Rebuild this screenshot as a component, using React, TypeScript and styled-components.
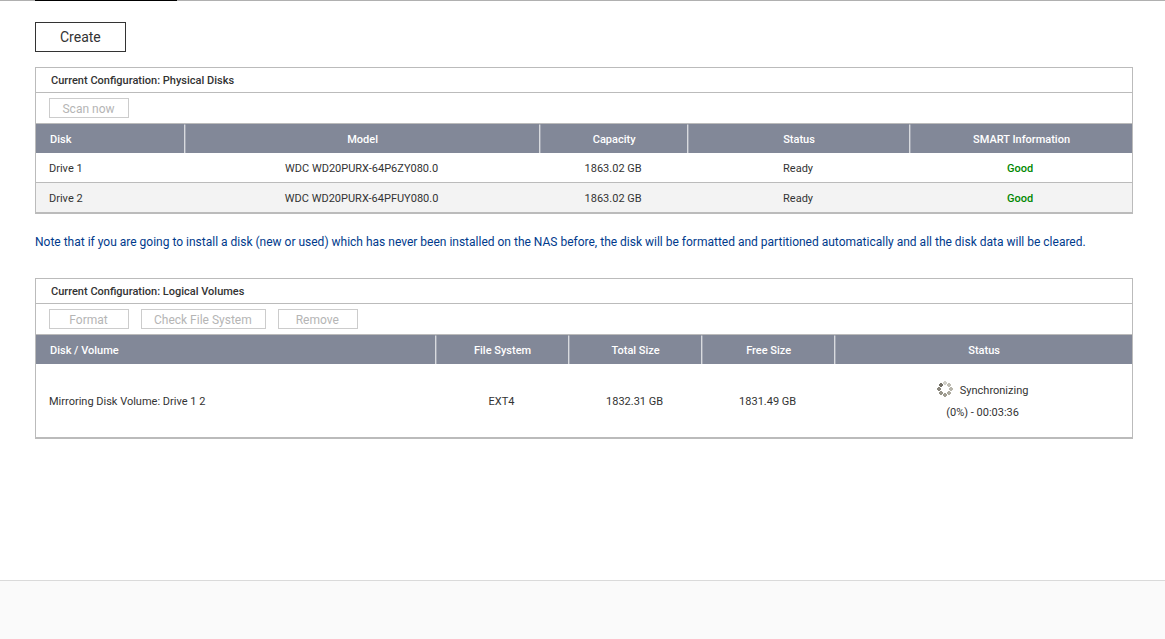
import React from "react";
import styled, { createGlobalStyle } from "styled-components";

const GlobalStyle = createGlobalStyle`
  *, *::before, *::after { box-sizing: border-box; }
  body {
    margin: 0;
    background: #fff;
    color: #333;
    font: 11px/16px Roboto, "Liberation Sans", sans-serif;
  }
`;

const Page = styled.div`
  display: flex;
  flex-direction: column;
  min-height: 100vh;
`;

const TabLine = styled.div`
  height: 1px;
  padding-left: 35px;
  background: #b0b0b0;
`;

const ActiveTabLine = styled.div`
  width: 142px;
  height: 1px;
  background: #000;
`;

const Content = styled.main`
  flex: 1;
  padding: 21px 32px 24px 35px;
`;

const CreateButton = styled.button`
  display: block;
  height: 30px;
  margin-bottom: 15px;
  padding: 0 24px;
  border: 1px solid #333;
  background: #fff;
  color: #333;
  font: 14px/28px Roboto, "Liberation Sans", sans-serif;
`;

const Panel = styled.section`
  border: 1px solid #bbb;
  border-bottom-width: 2px;
`;

const PanelTitle = styled.h2`
  margin: 0;
  padding: 2px 15px 0;
  border-bottom: 1px solid #bbb;
  font-size: 11px;
  font-weight: 500;
  line-height: 22px;
`;

const Toolbar = styled.div`
  display: flex;
  gap: 12px;
  padding: 5px 13px;
  border-bottom: 1px solid #bbb;
`;

const ToolButton = styled.button`
  height: 20px;
  min-width: 80px;
  padding: 2px 13px 0 12px;
  border: 1px solid #ccc;
  background: #fff;
  color: #b5b5b5;
  font: 12px/16px Roboto, "Liberation Sans", sans-serif;
`;

const Table = styled.table`
  width: 100%;
  border-collapse: separate;
  border-spacing: 0;
  table-layout: fixed;
`;

const Column = styled.col<{ $share?: string }>`
  width: ${(p) => p.$share ?? "auto"};
`;

const HeadCell = styled.th`
  height: 29px;
  padding: 1px 0 0;
  border-top: 1px solid #828898;
  border-right: 1px solid #d8dade;
  border-left: 1px solid #a4a8b4;
  background: #828898;
  color: #fff;
  font-weight: 500;
  text-align: center;
  &:first-child { padding-left: 14px; border-left: 0; text-align: left; }
  &:last-child { border-right: 0; }
`;

const Row = styled.tr<{ $shaded?: boolean }>`
  background: ${(p) => (p.$shaded ? "#f3f3f3" : "#fff")};
`;

const Cell = styled.td<{ $tall?: boolean; $good?: boolean; $divided?: boolean }>`
  height: ${(p) => (p.$tall ? "73px" : p.$divided ? "30px" : "29px")};
  padding: 2px 2px 0 0;
  border-bottom: ${(p) => (p.$divided ? "1px solid #bbb" : "0")};
  color: ${(p) => (p.$good ? "#008800" : "inherit")};
  font-weight: ${(p) => (p.$good ? 500 : 400)};
  text-align: center;
  &:first-child { padding-left: 13px; text-align: left; }
`;

const Note = styled.p`
  margin: 20px 0 28px;
  color: #003a8c;
  font-size: 12px;
  line-height: 16px;
`;

const Sync = styled.div`
  display: flex;
  flex-direction: column;
  align-items: center;
  line-height: 22px;
`;

const SyncLine = styled.div`
  display: flex;
  align-items: center;
  gap: 7px;
`;

const SpinnerIcon = styled.svg`
  margin-bottom: 4px;
`;

const Footer = styled.footer`
  height: 59px;
  border-top: 1px solid #dadada;
  background: #fafafa;
`;

const dots = [
  { x: 8, y: 2, c: "#d0cfc8" },
  { x: 12, y: 4, c: "#c0beb5" },
  { x: 14, y: 8, c: "#b8b6ac" },
  { x: 12, y: 12, c: "#aeaba0" },
  { x: 8, y: 14, c: "#a09d92" },
  { x: 4, y: 12, c: "#98958a" },
  { x: 2, y: 8, c: "#89867c" },
  { x: 4, y: 4, c: "#737067" },
];

const Spinner = () => (
  <SpinnerIcon width="16" height="16" viewBox="0 0 16 16" aria-hidden="true">
    {dots.map((d) => (
      <path
        key={`${d.x}-${d.y}`}
        fill={d.c}
        d={`M${d.x - 1} ${d.y - 2}h2v1h1v2h-1v1h-2v-1h-1v-2h1z`}
      />
    ))}
  </SpinnerIcon>
);

const disks = [
  { name: "Drive 1", model: "WDC WD20PURX-64P6ZY080.0" },
  { name: "Drive 2", model: "WDC WD20PURX-64PFUY080.0" },
];

export default function App() {
  return (
    <Page>
      <GlobalStyle />
      <TabLine>
        <ActiveTabLine />
      </TabLine>
      <Content>
        <CreateButton type="button">Create</CreateButton>

        <Panel aria-labelledby="physical">
          <PanelTitle id="physical">Current Configuration: Physical Disks</PanelTitle>
          <Toolbar>
            <ToolButton type="button" disabled>Scan now</ToolButton>
          </Toolbar>
          <Table aria-labelledby="physical">
            <colgroup>
              <Column $share="13.6%" />
              <Column $share="32.4%" />
              <Column $share="13.5%" />
              <Column $share="20.25%" />
              <Column />
            </colgroup>
            <thead>
              <tr>
                <HeadCell scope="col">Disk</HeadCell>
                <HeadCell scope="col">Model</HeadCell>
                <HeadCell scope="col">Capacity</HeadCell>
                <HeadCell scope="col">Status</HeadCell>
                <HeadCell scope="col">SMART Information</HeadCell>
              </tr>
            </thead>
            <tbody>
              {disks.map((disk, i) => {
                const divided = i < disks.length - 1;
                return (
                  <Row key={disk.name} $shaded={i % 2 === 1}>
                    <Cell $divided={divided}>{disk.name}</Cell>
                    <Cell $divided={divided}>{disk.model}</Cell>
                    <Cell $divided={divided}>1863.02 GB</Cell>
                    <Cell $divided={divided}>Ready</Cell>
                    <Cell $divided={divided} $good>Good</Cell>
                  </Row>
                );
              })}
            </tbody>
          </Table>
        </Panel>

        <Note>
          Note that if you are going to install a disk (new or used) which has never been installed on the NAS
          before, the disk will be formatted and partitioned automatically and all the disk data will be cleared.
        </Note>

        <Panel aria-labelledby="logical">
          <PanelTitle id="logical">Current Configuration: Logical Volumes</PanelTitle>
          <Toolbar>
            <ToolButton type="button" disabled>Format</ToolButton>
            <ToolButton type="button" disabled>Check File System</ToolButton>
            <ToolButton type="button" disabled>Remove</ToolButton>
          </Toolbar>
          <Table aria-labelledby="logical">
            <colgroup>
              <Column $share="36.5%" />
              <Column $share="12.14%" />
              <Column $share="12.14%" />
              <Column $share="12.14%" />
              <Column />
            </colgroup>
            <thead>
              <tr>
                <HeadCell scope="col">Disk / Volume</HeadCell>
                <HeadCell scope="col">File System</HeadCell>
                <HeadCell scope="col">Total Size</HeadCell>
                <HeadCell scope="col">Free Size</HeadCell>
                <HeadCell scope="col">Status</HeadCell>
              </tr>
            </thead>
            <tbody>
              <Row>
                <Cell $tall>Mirroring Disk Volume: Drive 1 2</Cell>
                <Cell $tall>EXT4</Cell>
                <Cell $tall>1832.31 GB</Cell>
                <Cell $tall>1831.49 GB</Cell>
                <Cell $tall>
                  <Sync role="status">
                    <SyncLine>
                      <Spinner />
                      <span>Synchronizing</span>
                    </SyncLine>
                    <span>(0%) - 00:03:36</span>
                  </Sync>
                </Cell>
              </Row>
            </tbody>
          </Table>
        </Panel>
      </Content>
      <Footer />
    </Page>
  );
}
